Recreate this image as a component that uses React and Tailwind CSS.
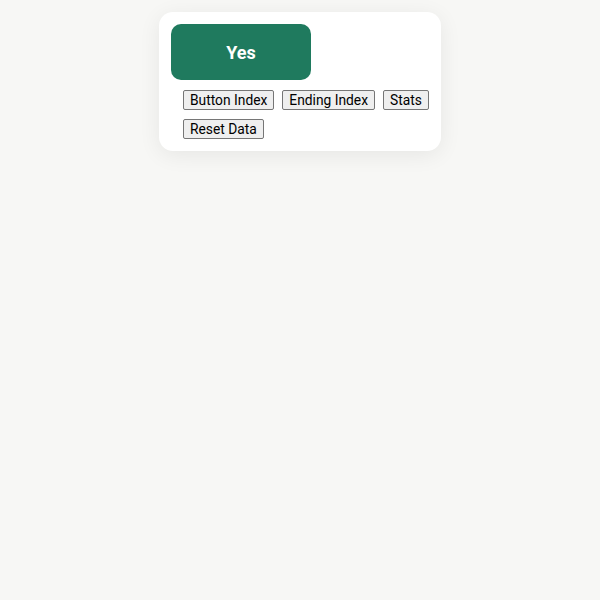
export default function App() {
  const tools = ['Button Index', 'Ending Index', 'Stats', 'Reset Data']

  return (
    <div className="min-h-screen bg-[#f7f7f5] pt-3 font-['Roboto',sans-serif]">
      <div className="mx-auto w-[282px] rounded-[14px] bg-white p-3 shadow-[0_4px_22px_rgba(0,0,0,0.07)]">
        <button className="flex h-14 w-[140px] items-center justify-center rounded-[10px] bg-[#1f7a5e] text-[18px] font-bold text-white">
          Yes
        </button>
        <div className="mt-2.5 flex flex-wrap gap-x-2 gap-y-[9px] pl-3">
          {tools.map((t) => (
            <button
              key={t}
              className="h-5 rounded-[2px] border border-[#767676] bg-[#efefef] px-1.5 text-[13.8px] leading-[18px] text-black"
            >
              {t}
            </button>
          ))}
        </div>
      </div>
    </div>
  )
}
